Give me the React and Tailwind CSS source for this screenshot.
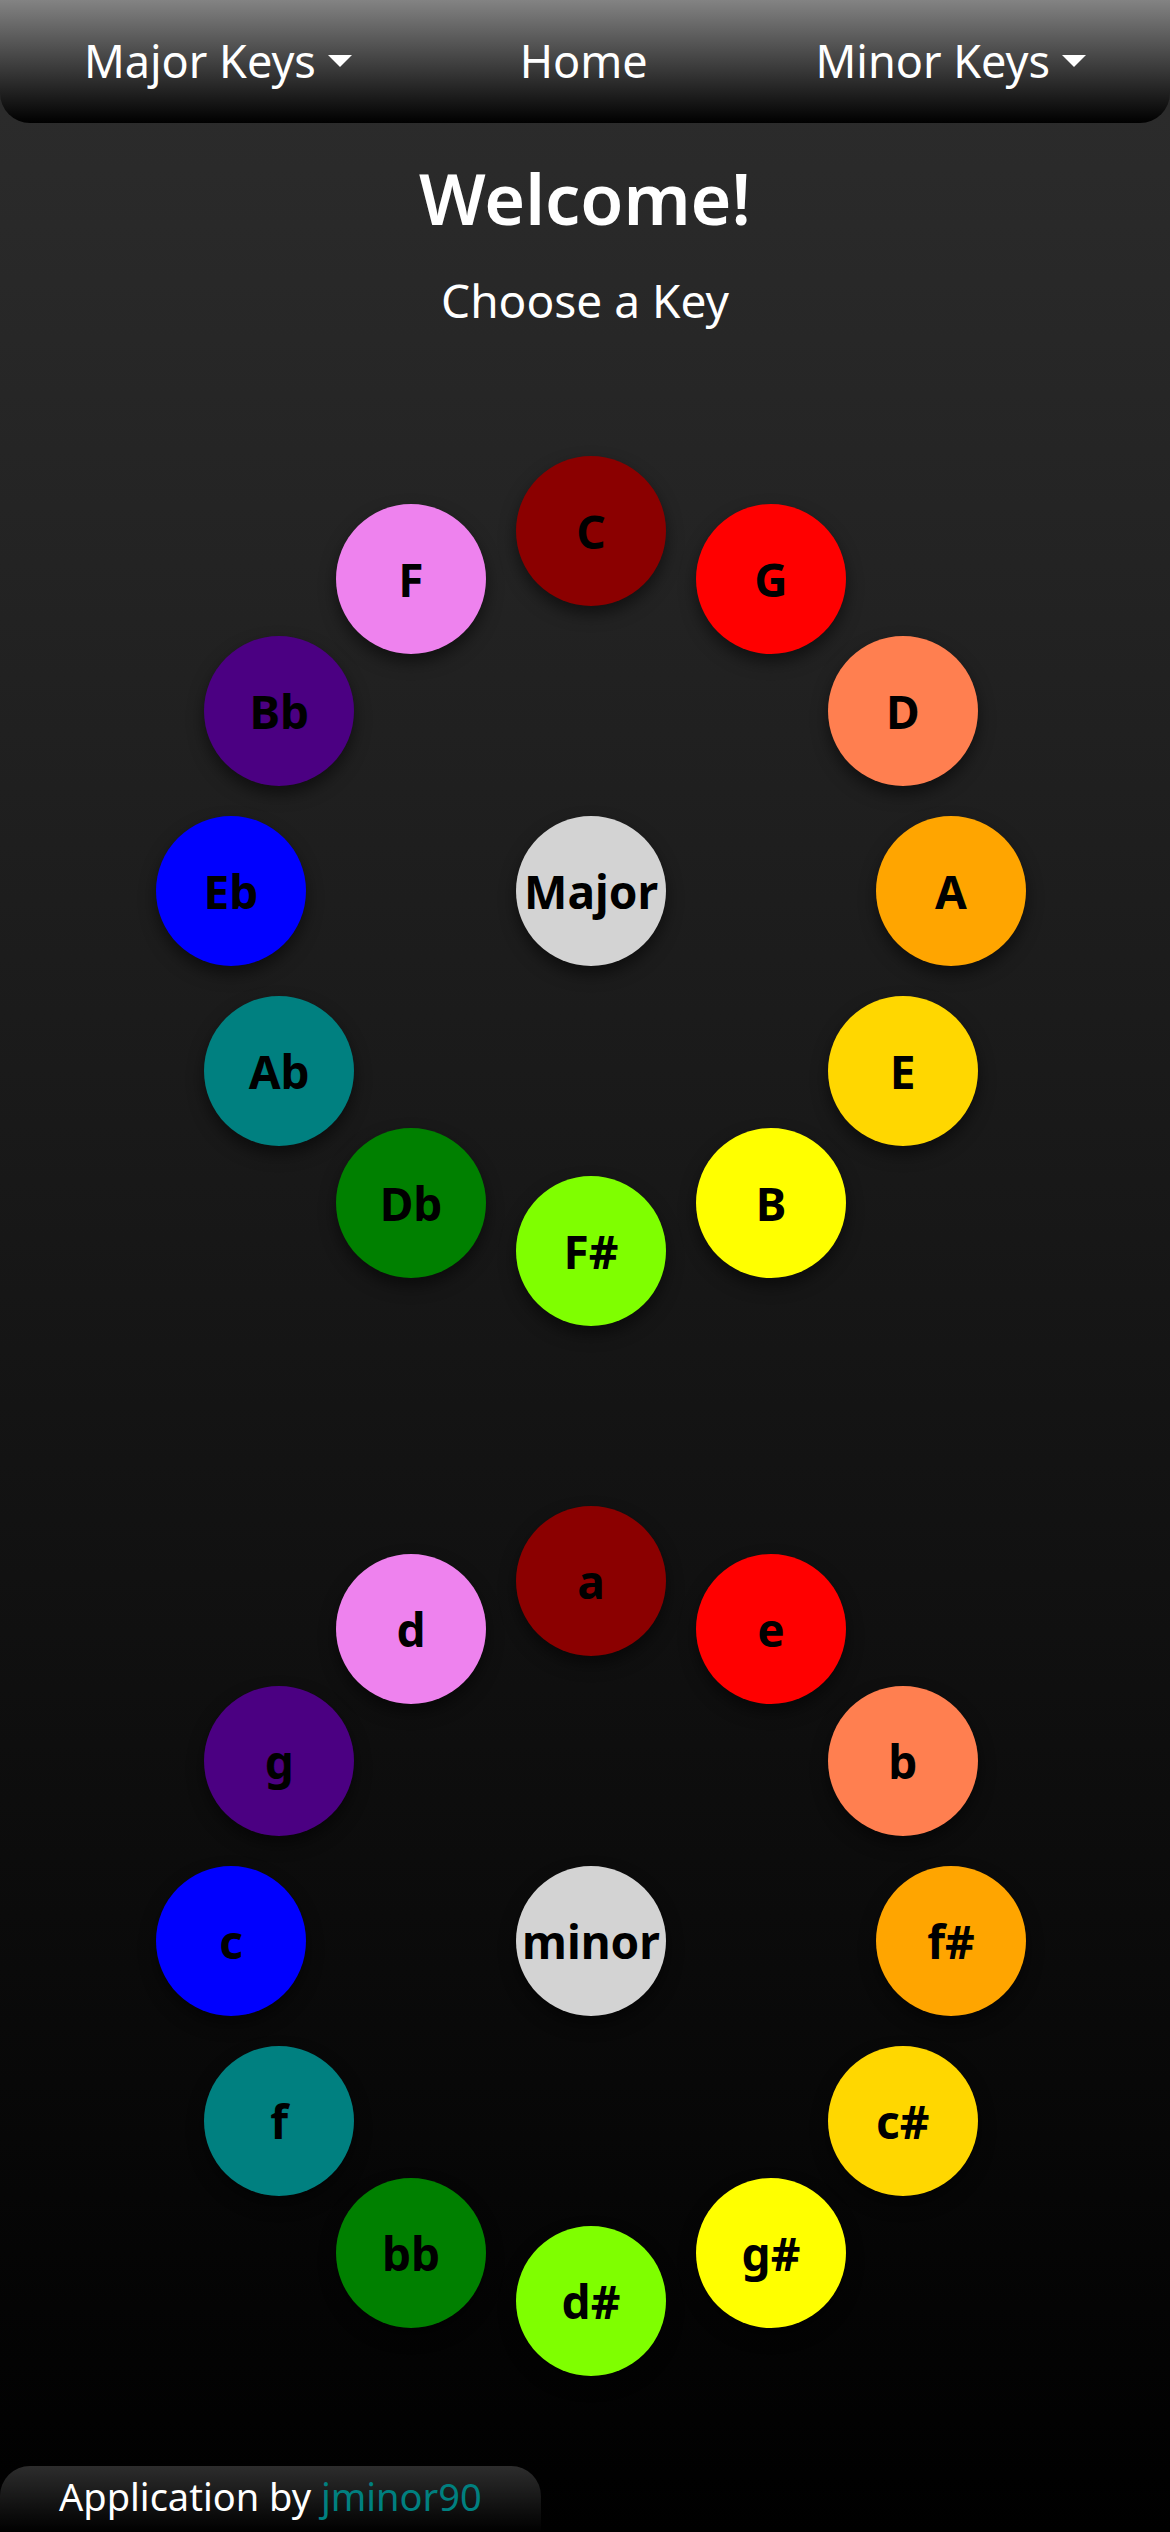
const COLORS = [
  "bg-[#8b0000]",
  "bg-[#ff0000]",
  "bg-[#ff7f50]",
  "bg-[#ffa500]",
  "bg-[#ffd700]",
  "bg-[#ffff00]",
  "bg-[#7fff00]",
  "bg-[#008000]",
  "bg-[#008080]",
  "bg-[#0000ff]",
  "bg-[#4b0082]",
  "bg-[#ee82ee]",
];

const MAJOR = ["C", "G", "D", "A", "E", "B", "F#", "Db", "Ab", "Eb", "Bb", "F"];
const MINOR = ["a", "e", "b", "f#", "c#", "g#", "d#", "bb", "f", "c", "g", "d"];

const DISC =
  "absolute flex size-[150px] items-center justify-center rounded-full text-[46px] leading-[60px] font-bold text-black shadow-[0_8px_16px_rgba(0,0,0,0.5)]";

// Places a 150px disc on the circle inscribed in its square container.
function discPosition(x, y) {
  return {
    left: `calc((100% - 150px) * ${((1 + x) / 2).toFixed(4)})`,
    top: `calc((100% - 150px) * ${((1 + y) / 2).toFixed(4)})`,
  };
}

function KeyWheel({ label, keys }) {
  return (
    <section aria-label={`${label} keys`} className="relative aspect-square w-full max-w-[870px]">
      {keys.map((name, i) => {
        const angle = (i * Math.PI) / 6;
        return (
          <button
            key={name}
            type="button"
            className={`${DISC} ${COLORS[i]}`}
            style={discPosition(Math.sin(angle), -Math.cos(angle))}
          >
            {name}
          </button>
        );
      })}
      <div className={`${DISC} bg-[#d3d3d3]`} style={discPosition(0, 0)}>
        {label}
      </div>
    </section>
  );
}

function NavMenu({ label }) {
  return (
    <button type="button" aria-haspopup="menu" className="flex items-center gap-3">
      {label}
      <svg viewBox="0 0 24 12" className="h-3 w-6 fill-white" aria-hidden="true">
        <path d="M0 0h24L12 12z" />
      </svg>
    </button>
  );
}

export default function App() {
  return (
    <div className="flex min-h-screen flex-col bg-linear-to-b/srgb from-[#2d2d2d] to-black font-['Noto_Sans','Open_Sans',sans-serif] text-white">
      <nav className="flex justify-around rounded-b-[30px] bg-linear-to-b/srgb from-[#838383] to-black pt-[25px] pb-[26px] text-[45px] leading-[72px]">
        <NavMenu label="Major Keys" />
        <a href="#home">Home</a>
        <NavMenu label="Minor Keys" />
      </nav>

      <main className="flex flex-1 flex-col items-center">
        <h1 className="mt-[30px] text-[70px] leading-[90px] font-semibold">Welcome!</h1>
        <p className="mt-[21px] text-[46px] leading-[72px]">Choose a Key</p>
        <div className="mt-[120px] mb-[90px] flex w-full flex-col items-center gap-[180px] pl-3">
          <KeyWheel label="Major" keys={MAJOR} />
          <KeyWheel label="minor" keys={MINOR} />
        </div>
      </main>

      <footer className="self-start rounded-t-[30px] bg-linear-to-b/srgb from-[#2d2d2d] to-black px-[59px] pb-1.5 text-[38px] leading-[60px]">
        Application by{" "}
        <a href="#jminor90" className="text-[#008080]">
          jminor90
        </a>
      </footer>
    </div>
  );
}
